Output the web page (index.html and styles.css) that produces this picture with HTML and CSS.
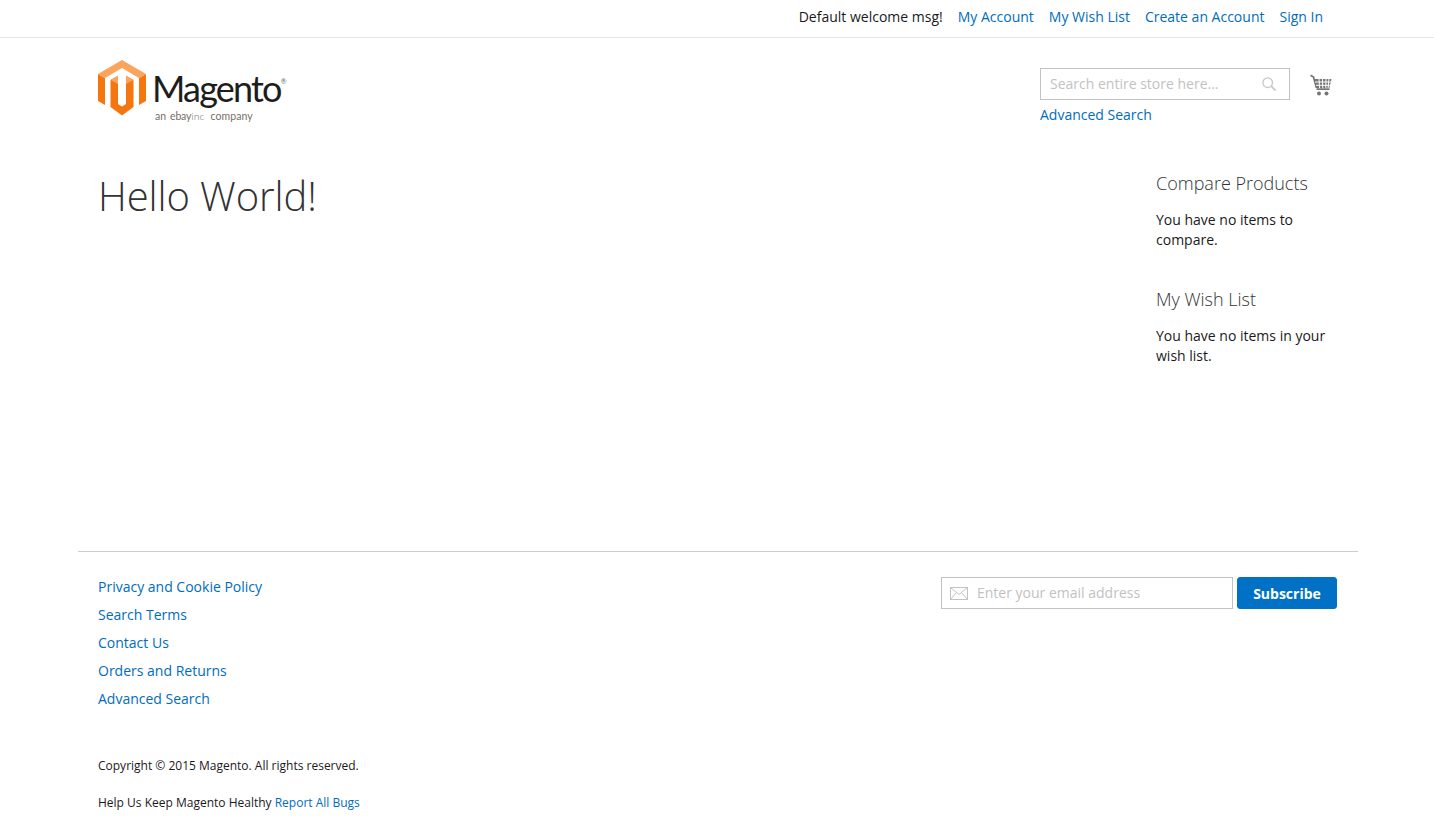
FILE: index.html
```html
<!DOCTYPE html>
<html lang="en">
<head>
<meta charset="utf-8">
<title>Hello World!</title>
<link rel="stylesheet" href="styles.css">
</head>
<body>
<div class="topbar">
  <ul class="toplinks">
    <li class="welcome">Default welcome msg!</li>
    <li><a href="#">My Account</a></li>
    <li><a href="#">My Wish List</a></li>
    <li><a href="#">Create an Account</a></li>
    <li><a href="#">Sign In</a></li>
  </ul>
</div>
<header class="header">
  <a class="logo" href="#">
    <svg class="logo-mark" width="48" height="56" viewBox="0 0 48 56">
      <path fill="#f5760f" d="M0 14 7 18V45L0 41ZM48 14 41 18V45L48 41Z"/>
      <path fill="#fba45e" d="M24 0 48 14 41 18 24 8 7 18 0 14Z"/>
      <path fill="#f5760f" d="M12.500 20 20 15.700V44L24 46.500 28 44V15.700L35.500 20V47L24 55.500 12.500 47Z"/>
      <path fill="#fba45e" d="M12.500 20 20 15.700V24ZM35.500 20 28 15.700V24Z"/>
      <path fill="#fff" d="M21.500 13 24 11.500 26.500 13V43L24 44.500 21.500 43Z"/>
    </svg>
    <span class="logo-text">
      <span class="logo-name">Magento<sup class="logo-reg">®</sup></span>
      <span class="logo-sub">an <b>ebay</b><i>inc</i> company</span>
    </span>
  </a>
  <div class="header-right">
    <div class="search-col">
      <div class="search-box">
        <span class="search-placeholder">Search entire store here...</span>
        <svg class="search-icon" width="14" height="14" viewBox="0 0 16 16" fill="none" stroke="#c8c8c8" stroke-width="1.500">
          <circle cx="6.500" cy="6.500" r="5.500"/>
          <path d="M10.500 10.500 15.500 15.500" stroke-width="2"/>
        </svg>
      </div>
      <a class="adv-link" href="#">Advanced Search</a>
    </div>
    <svg class="cart" width="22" height="22" viewBox="0 0 22 22">
      <path fill="none" stroke="#757575" stroke-width="1.800" d="M.5 1.200 3.500 3 6.500 14"/>
      <path fill="#757575" d="M4.200 5H21.500L19.300 14.500H6.800Z"/>
      <path fill="none" stroke="#fff" stroke-width="1" d="M5 8H21M6 11.300H20.300M9 5 9.700 14.500M12.500 5 12.800 14.500M16 5 15.800 14.500M19 5 18 14.500"/>
      <path fill="#757575" d="M6.500 14.500H19.500V16H6.500Z"/>
      <circle fill="#757575" cx="9" cy="19.500" r="2"/>
      <circle fill="#757575" cx="16.500" cy="19.500" r="2"/>
    </svg>
  </div>
</header>
<main class="main">
  <h1 class="page-title">Hello World!</h1>
  <aside class="sidebar">
    <section class="block">
      <h2 class="block-title">Compare Products</h2>
      <p class="block-text">You have no items to compare.</p>
    </section>
    <section class="block">
      <h2 class="block-title">My Wish List</h2>
      <p class="block-text">You have no items in your wish list.</p>
    </section>
  </aside>
</main>
<footer class="footer">
  <div class="footer-top">
    <ul class="footer-links">
      <li><a href="#">Privacy and Cookie Policy</a></li>
      <li><a href="#">Search Terms</a></li>
      <li><a href="#">Contact Us</a></li>
      <li><a href="#">Orders and Returns</a></li>
      <li><a href="#">Advanced Search</a></li>
    </ul>
    <div class="newsletter">
      <div class="email-box">
        <svg class="mail-icon" width="18" height="13" viewBox="0 0 18 13" fill="none" stroke="#c2c2c2" stroke-width="1">
          <rect x=".5" y=".5" width="17" height="12"/>
          <path d="M.5.500 9 7.500 17.500.5M.5 12.500 6.500 5.500M17.500 12.500 11.500 5.500"/>
        </svg>
        <span class="email-placeholder">Enter your email address</span>
      </div>
      <button class="subscribe" type="button">Subscribe</button>
    </div>
  </div>
  <p class="copyright">Copyright © 2015 Magento. All rights reserved.</p>
  <p class="bugs">Help Us Keep Magento Healthy <a href="#">Report All Bugs</a></p>
</footer>
</body>
</html>
```
FILE: styles.css
```css
* { box-sizing: border-box; }
html, body { margin: 0; padding: 0; }
body {
  font-family: "Open Sans", sans-serif;
  font-size: 14px;
  line-height: 20px;
  color: #333;
  background: #fff;
}
a { color: #006cbe; text-decoration: none; }
ul { list-style: none; margin: 0; padding: 0; }
h1, h2, p { margin: 0; }

.topbar {
  height: 38px;
  border-bottom: 1px solid #e5e5e5;
  padding: 7px 111px 0 0;
}
.toplinks { display: flex; justify-content: flex-end; gap: 15px; }
.welcome { color: #1a1a1a; }

.header {
  display: flex;
  justify-content: space-between;
  margin-left: 98px;
  padding: 22px 102px 0 0;
  height: 127px;
}
.logo { display: flex; gap: 6px; height: 64px; align-items: flex-start; }
.logo-mark { display: block; }
.logo-text { display: flex; flex-direction: column; padding-top: 6px; }
.logo-name {
  font-family: "Lato", sans-serif;
  font-size: 36px;
  line-height: 44px;
  letter-spacing: -1.800px;
  color: #1d1d1b;
}
.logo-reg { font-size: 7px; line-height: 0; vertical-align: 18px; letter-spacing: 0; color: #666; }
.logo-sub {
  font-family: "Lato", sans-serif;
  font-size: 10.500px;
  line-height: 12px;
  letter-spacing: .1px;
  color: #776e68;
  padding-left: 3px;
  word-spacing: 1px;
}
.logo-sub b { font-weight: 400; letter-spacing: -.2px; }
.logo-sub i { font-style: normal; font-weight: 300; margin-right: 2px; }

.header-right { display: flex; gap: 20px; padding-top: 8px; }
.search-col { display: flex; flex-direction: column; width: 250px; }
.search-box {
  display: flex;
  align-items: center;
  justify-content: space-between;
  height: 32px;
  border: 1px solid #c2c2c2;
  padding: 0 13px 0 9px;
}
.search-placeholder { color: #c2c2c2; }
.adv-link { margin-top: 5px; }
.cart { margin-top: 6px; }

.main {
  display: flex;
  justify-content: space-between;
  height: 386px;
  margin-left: 98px;
  padding-right: 98px;
}
.page-title {
  font-size: 40px;
  font-weight: 300;
  line-height: 50px;
  letter-spacing: -.1px;
  color: #333;
  margin-top: 6px;
}
.sidebar { width: 180px; }
.block { margin-bottom: 37px; }
.block-title {
  font-size: 18px;
  font-weight: 300;
  line-height: 24px;
  color: #333;
  margin-top: 6px;
  margin-bottom: 15px;
}
.block-text { color: #1a1a1a; }

.footer {
  margin: 0 76px 0 78px;
  border-top: 1px solid #ccc;
  padding: 25px 21px 0 20px;
}
.footer-top { display: flex; justify-content: space-between; }
.footer-links li { height: 28px; }
.newsletter { display: flex; gap: 4px; }
.email-box {
  display: flex;
  align-items: center;
  gap: 9px;
  width: 292px;
  height: 32px;
  border: 1px solid #c2c2c2;
  padding-left: 8px;
}
.email-placeholder { color: #c2c2c2; }
.subscribe {
  width: 100px;
  height: 32px;
  border: 1px solid #0071c5;
  border-radius: 3px;
  background: #0071c5;
  color: #fff;
  font-family: "Open Sans", sans-serif;
  font-size: 14px;
  font-weight: 700;
  padding: 0;
}
.copyright, .bugs { font-size: 12px; color: #1a1a1a; }
.copyright { margin-top: 39px; }
.bugs { margin-top: 17px; }
```
